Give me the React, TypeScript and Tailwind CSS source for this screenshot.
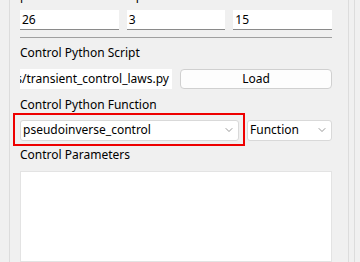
import { ChevronDown } from "lucide-react";

const font = { fontFamily: '"Noto Sans", "Open Sans", sans-serif' };

const Combo = ({ value, className }: { value: string; className: string }) => (
  <div
    className={`h-[21px] flex items-center justify-between bg-white border border-[#d9d9d9] rounded-[3px] pl-[2px] pr-[3px] text-[12px] text-black ${className}`}
  >
    <span>{value}</span>
    <ChevronDown size={12} strokeWidth={1.25} className="text-[#5c5c5c]" />
  </div>
);

const LineEdit = ({ value }: { value: string }) => (
  <div className="h-[20px] bg-white border-b border-[#8a8a8a] flex items-center px-[2px] text-[12px] text-black">
    {value}
  </div>
);

export default function App() {
  return (
    <div
      className="w-[360px] h-[262px] overflow-hidden bg-[#f0f0f0] flex"
      style={font}
    >
      {/* left group frame */}
      <div className="w-[9px] shrink-0" />
      <div className="w-[340px] shrink-0 border-l border-[#dcdcdc] border-r flex">
        <div className="w-[10px] shrink-0" />
        <div className="w-[312px] shrink-0 flex flex-col">
          {/* top row labels, mostly cut off */}
          <div className="-mt-[12px] h-[16px] grid grid-cols-3 gap-2 text-[12px] leading-[16px] text-black">
            <span>p</span>
            <span>Np</span>
            <span>Iters</span>
          </div>
          <div className="mt-[6px] grid grid-cols-3 gap-2">
            <LineEdit value="26" />
            <LineEdit value="3" />
            <LineEdit value="15" />
          </div>
          <div className="mt-[7px] h-px bg-[#a0a0a0]" />

          <div className="mt-[7px] h-[16px] text-[12px] leading-[16px] text-black">
            Control Python Script
          </div>
          <div className="mt-[8px] flex gap-2 h-[21px]">
            <div className="w-[152px] bg-white flex justify-end items-center overflow-hidden whitespace-nowrap pr-[3px] text-[12px] text-black">
              <span>scripts/transient_control_laws.py</span>
            </div>
            <button className="flex-1 bg-[#fdfdfd] border border-[#d0d0d0] rounded-[4px] text-[12px] text-black">
              Load
            </button>
          </div>

          <div className="mt-[8px] h-[16px] text-[12px] leading-[16px] text-black">
            Control Python Function
          </div>
          <div className="mt-[7px] flex gap-2">
            <div className="relative w-[219px]">
              <Combo value="pseudoinverse_control" className="w-full" />
              <div className="absolute -left-[7px] -top-[7px] w-[232px] h-[33px] border-2 border-[#ee0000] pointer-events-none" />
            </div>
            <Combo value="Function" className="flex-1" />
          </div>

          <div className="mt-[6px] h-[16px] text-[12px] leading-[16px] text-black">
            Control Parameters
          </div>
          <div className="mt-[8px] h-[100px] bg-white border border-[#e3e3e3]" />
        </div>
      </div>
      <div className="w-[6px] shrink-0 border-r border-[#dcdcdc]" />
      {/* neighbouring panel edge */}
      <div className="w-[9px] shrink-0" />
      <div className="flex-1 flex flex-col">
        <div className="h-[225px] border-l border-b border-[#8a8a9a]" />
        <div className="mt-[9px] h-[28px] border-l border-[#cfcfcf]" />
      </div>
    </div>
  );
}
